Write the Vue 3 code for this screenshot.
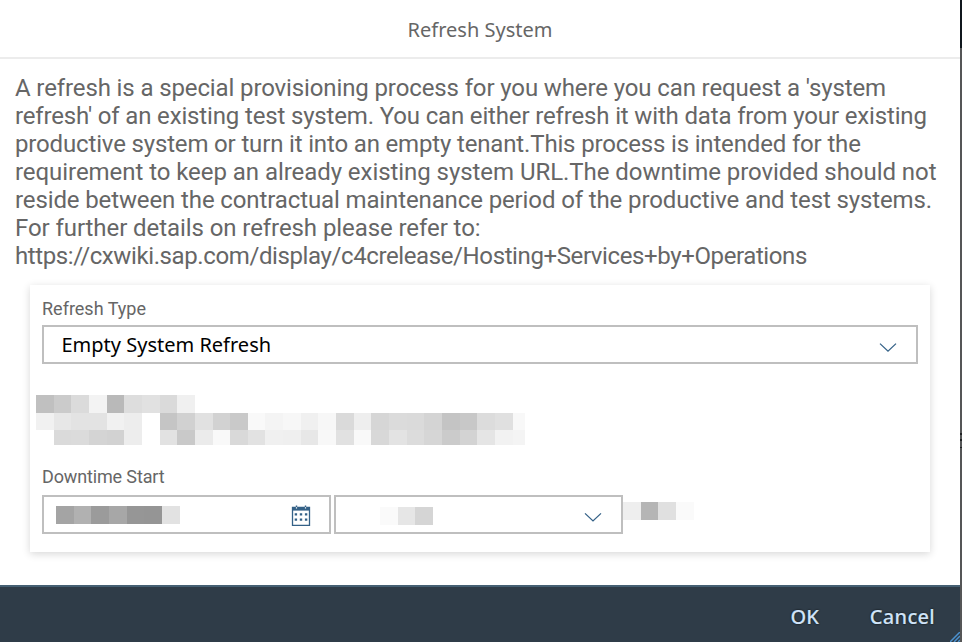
<script setup>
const lines = [
  "A refresh is a special provisioning process for you where you can request a 'system",
  "refresh' of an existing test system. You can either refresh it with data from your existing",
  'productive system or turn it into an empty tenant.This process is intended for the',
  'requirement to keep an already existing system URL.The downtime provided should not',
  'reside between the contractual maintenance period of the productive and test systems.',
  'For further details on refresh please refer to:',
  'https://cxwiki.sap.com/display/c4crelease/Hosting+Services+by+Operations',
]

// Grey level of each redaction tile; 255 leaves the tile empty.
const summary = [
  { y: 0, h: 18, tones: [192, 203, 219, 243, 185, 221, 225, 218, 240] },
  { y: 18, h: 17, tones: [241, 231, 227, 227, 241, 237, 255, 197, 209, 225, 210, 201, 249, 244, 247, 240, 247, 218, 238, 214, 219, 218, 212, 196, 200, 220, 224, 248] },
  { y: 35, h: 15, tones: [255, 218, 219, 212, 210, 237, 255, 226, 201, 235, 249, 217, 226, 240, 239, 231, 248, 225, 249, 216, 227, 220, 214, 203, 211, 229, 242, 244] },
]
const date = [{ y: 0, h: 18, tones: [164, 177, 155, 167, 150, 149, 226] }]
const time = [{ y: 0, h: 18, tones: [250, 230, 213] }]
const zone = [{ y: 0, h: 18, tones: [238, 181, 224, 250] }]

const tiles = (rows, limit) =>
  rows.flatMap((r) =>
    r.tones.map((t, i) => {
      const x = Math.round(i * 17.65)
      return { x, y: r.y, w: Math.min(Math.round((i + 1) * 17.65), limit) - x, h: r.h, fill: `rgb(${t},${t},${t})`, t }
    }),
  ).filter((c) => c.t < 255)
</script>

<template>
  <div class="screen">
    <section class="dialog">
      <header class="title"><span>Refresh System</span></header>
      <main class="body">
        <p class="intro">
          <span v-for="(l, i) in lines" :key="i" class="line" :class="'l' + (i + 1)">{{ l }}</span>
        </p>
        <div class="card">
          <label class="label type">Refresh Type</label>
          <div class="field select">
            <span class="value">Empty System Refresh</span>
            <svg class="chev" width="18" height="10" viewBox="0 0 18 10"><path d="M1 1.6 9 9.1 17 1.6" /></svg>
          </div>
          <svg class="summary" width="489" height="50" shape-rendering="crispEdges">
            <rect v-for="(c, i) in tiles(summary, 489)" :key="i" :x="c.x" :y="c.y" :width="c.w" :height="c.h" :fill="c.fill" />
          </svg>
          <label class="label start">Downtime Start</label>
          <div class="row">
            <div class="field date">
              <svg width="124" height="18" shape-rendering="crispEdges">
                <rect v-for="(c, i) in tiles(date, 124)" :key="i" :x="c.x" :y="c.y" :width="c.w" :height="c.h" :fill="c.fill" />
              </svg>
              <svg class="cal" width="20" height="22" viewBox="0 0 20 22">
                <path class="frame" d="M1.5 2.5H18.5V20.4H1.5Z" />
                <path class="solid" d="M1 2H19V5.6H1Z" />
                <path class="ring" d="M5.5 .5V4M14.5 .5V4" />
                <path class="hole" d="M5.5 2.2V3.6M14.5 2.2V3.6" />
                <path class="solid" d="M3.7 8.2h2.4v2.4H3.7zM8.8 8.2h2.4v2.4H8.8zM13.9 8.2h2.4v2.4h-2.4zM3.7 13.4h2.4v2.4H3.7zM8.8 13.4h2.4v2.4H8.8zM13.9 13.4h2.4v2.4h-2.4z" />
              </svg>
            </div>
            <div class="field time">
              <svg class="masked" width="53" height="18" shape-rendering="crispEdges">
                <rect v-for="(c, i) in tiles(time, 53)" :key="i" :x="c.x" :y="c.y" :width="c.w" :height="c.h" :fill="c.fill" />
              </svg>
              <svg class="chev" width="18" height="10" viewBox="0 0 18 10"><path d="M1 1.4 9 8.9 17 1.4" /></svg>
            </div>
            <svg class="zone" width="71" height="18" shape-rendering="crispEdges">
              <rect v-for="(c, i) in tiles(zone, 71)" :key="i" :x="c.x" :y="c.y" :width="c.w" :height="c.h" :fill="c.fill" />
            </svg>
          </div>
        </div>
      </main>
      <footer class="footer">
        <button class="ok">OK</button>
        <button class="cancel">Cancel</button>
        <svg class="grip" width="10" height="10" viewBox="0 0 10 10"><path d="M0 10 10 0M4 10 10 4M8 10 10 8" /></svg>
      </footer>
    </section>
    <aside class="backdrop"><i class="top"></i><i class="m1"></i><i class="m2"></i><i class="m3"></i></aside>
  </div>
</template>

<style>
body { margin: 0; overflow: hidden; }
</style>

<style scoped>
.screen { display: flex; width: 962px; height: 642px; background: #fff; font-family: Roboto, "Noto Sans", sans-serif; color: #666; overflow: hidden; }
.dialog { display: flex; flex-direction: column; width: 960px; height: 642px; background: #fff; }
.title { box-sizing: border-box; height: 59px; border-bottom: 2px solid #ececec; padding-top: 18px; text-align: center; font-family: "Noto Sans", sans-serif; font-size: 20px; line-height: 24px; }
.body { flex: 1; padding: 15px 0 0 15px; }
.intro { margin: 0; font-size: 24px; line-height: 28px; white-space: nowrap; }
.line { display: block; }
.l1 { letter-spacing: -.12px; }
.l2 { letter-spacing: -.154px; }
.l3 { letter-spacing: -.158px; }
.l4 { letter-spacing: -.055px; }
.l5 { letter-spacing: -.118px; }
.l6 { letter-spacing: -.075px; }
.l7 { letter-spacing: -.39px; }
.card { box-sizing: border-box; width: 900px; height: 267px; margin: 15px 0 0 15px; padding: 12px; box-shadow: 0 2px 8px rgba(0, 0, 0, .16); display: flex; flex-direction: column; align-items: flex-start; }
.label { font-size: 18px; line-height: 24px; height: 28px; white-space: nowrap; }
.field { box-sizing: border-box; display: flex; align-items: center; height: 39px; border: 2px solid #bfbfbf; background: #fff; }
.select { width: 876px; padding: 0 19px 0 17.5px; justify-content: space-between; color: #000; font-family: "Noto Sans", sans-serif; font-size: 20px; line-height: 24px; }
.chev { margin-top: 5px; }
.chev path { fill: none; stroke: #346187; stroke-width: 1.3; }
.summary { display: block; margin: 31px 0 0 -6px; }
.start { margin-top: 20px; height: 30px; letter-spacing: -.14px; }
.row { display: flex; }
.date { width: 289px; padding: 0 18px 0 12px; justify-content: space-between; }
.cal { margin-top: 2px; }
.time { width: 289px; margin-left: 3px; padding: 0 19px 0 44px; justify-content: space-between; }
.masked { margin-top: 2px; }
.zone { margin-top: 7px; }
.frame { fill: none; stroke: #346187; stroke-width: 1.3; }
.solid { fill: #346187; }
.ring { stroke: #346187; stroke-width: 1.4; }
.hole { stroke: #fff; stroke-width: 1.2; }
.footer { position: relative; box-sizing: border-box; height: 57px; border-top: 2px solid #456073; background: #2f3c48; display: flex; justify-content: flex-end; padding: 18px 25px 0 0; gap: 51px; }
button { border: 0; padding: 0; background: none; font: 500 20px/24px "Noto Sans", sans-serif; height: 24px; letter-spacing: .3px; color: #d0e4f8; text-shadow: 0 0 2px #000; -webkit-text-stroke: .2px #d0e4f8; }
.ok { letter-spacing: 0; }
.grip { position: absolute; right: 0; bottom: 0; }
.grip path { fill: none; stroke: #4b91cf; stroke-width: 1.5; }
.backdrop { width: 2px; background: #555657; display: flex; flex-direction: column; }
.top { height: 48px; background: #10171d; }
.m1 { height: 2px; margin-top: 385px; background: #202224; }
.m2 { height: 2px; margin-top: 4px; background: #202224; }
.m3 { height: 1px; margin-top: 6px; background: #202224; }
</style>
